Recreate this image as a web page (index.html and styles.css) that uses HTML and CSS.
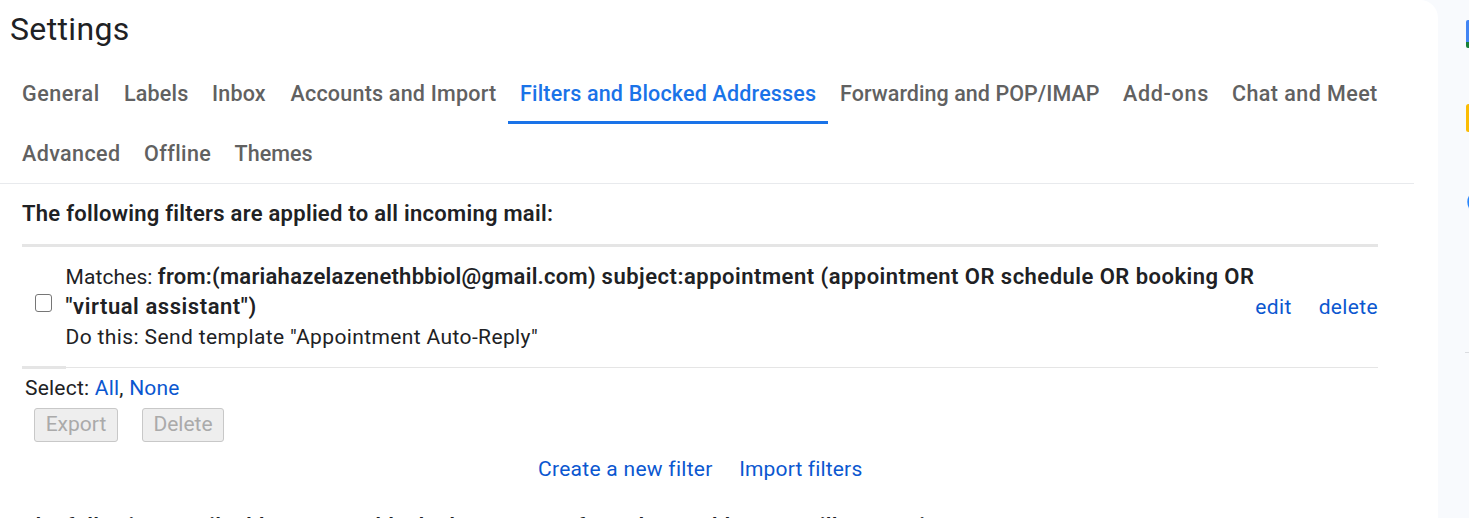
FILE: index.html
```html
<!DOCTYPE html>
<html lang="en">
<head>
<meta charset="utf-8">
<title>Settings</title>
<link rel="stylesheet" href="styles.css">
</head>
<body>
<div class="app">
  <main class="panel">
    <h1 class="title">Settings</h1>
    <nav class="tabs">
      <a class="tab t-general">General</a>
      <a class="tab t-labels">Labels</a>
      <a class="tab t-inbox">Inbox</a>
      <a class="tab t-accounts">Accounts and Import</a>
      <a class="tab t-filters active">Filters and Blocked Addresses</a>
      <a class="tab t-forwarding">Forwarding and POP/IMAP</a>
      <a class="tab t-addons">Add-ons</a>
      <a class="tab t-chat">Chat and Meet</a>
      <a class="tab t-advanced">Advanced</a>
      <a class="tab t-offline">Offline</a>
      <a class="tab t-themes">Themes</a>
    </nav>
    <section class="content">
      <h2 class="heading">The following filters are applied to all incoming mail:</h2>
      <div class="filter">
        <div class="check"><span class="box"></span></div>
        <div class="desc">
          <div><span class="matches">Matches: </span><b class="query q-from">from:(mariahazelazenethbbiol@gmail.com) </b><b class="query q-subject">subject:appointment </b><b class="query q-words">(appointment OR schedule OR booking OR</b></div>
          <div><b class="query q-phrase">"virtual assistant")</b></div>
          <div class="action">Do this: Send template "Appointment Auto-Reply"</div>
        </div>
        <div class="ops"><a class="edit">edit</a><a class="del">delete</a></div>
      </div>
      <div class="rule"></div>
      <div class="select">Select: <a>All</a>, <a>None</a></div>
      <div class="buttons"><button class="btn export" disabled>Export</button><button class="btn delete" disabled>Delete</button></div>
      <div class="links"><a class="create">Create a new filter</a><a class="import">Import filters</a></div>
      <h2 class="blocked">The following email addresses are blocked. Messages from these addresses will appear in Spam:</h2>
    </section>
  </main>
  <aside class="side">
    <svg class="side-icon calendar" width="3" height="28" viewBox="0 0 3 28"><path d="M3 0H2Q0 0 0 2V22H3Z" fill="#4285f4"/><path d="M0 22H3V28H2Q0 28 0 26Z" fill="#188038"/></svg>
    <svg class="side-icon keep" width="3" height="28" viewBox="0 0 3 28"><path d="M3 0H2.500Q0 0 0 2.500V25.500Q0 28 2.500 28H3Z" fill="#fbbc04"/></svg>
    <svg class="side-icon tasks" width="3" height="28" viewBox="0 0 3 28"><circle cx="13.300" cy="14" r="12" fill="#2684fc"/></svg>
    <div class="side-line"></div>
  </aside>
</div>
</body>
</html>
```
FILE: styles.css
```css
* { box-sizing: border-box; }
body {
  margin: 0;
  overflow: hidden;
  background: #f8fafd;
  color: #202124;
  font: 400 21px/30px Roboto, "Liberation Sans", sans-serif;
}
h1, h2 { margin: 0; }
.app { display: flex; width: 1469px; height: 518px; overflow: hidden; }
.panel { width: 1438px; height: 518px; background: #fff; border-radius: 0 18px 0 0; overflow: hidden; white-space: nowrap; }
.title { height: 64px; padding: 9px 0 0 10px; font-size: 32px; line-height: 40px; font-weight: 400; letter-spacing: 0.350px; }
.tabs { display: flex; flex-wrap: wrap; width: 1414px; height: 120px; padding-left: 10px; border-bottom: 1px solid #e8eaed; }
.tab { height: 60px; padding: 15px 0 0 12px; color: #616161; font-size: 21.500px; font-weight: 500; letter-spacing: 0.180px; }
.tab.active { color: #1a73e8; border-bottom: 3px solid #1a73e8; }
.t-general { width: 102px; letter-spacing: 0.550px; }
.t-labels { width: 88px; }
.t-inbox { width: 78.500px; }
.t-accounts { width: 229.500px; letter-spacing: 0.220px; }
.t-filters { width: 320px; }
.t-forwarding { width: 283px; letter-spacing: 0.050px; }
.t-addons { width: 109px; letter-spacing: 0.700px; }
.t-chat { width: 170px; letter-spacing: 0.430px; }
.t-advanced { width: 122px; letter-spacing: 0.400px; }
.t-offline { width: 90.500px; letter-spacing: 0.400px; }
.t-themes { letter-spacing: 0.050px; }
.content { width: 1378px; padding: 0 0 0 22px; }
.heading, .blocked { font-size: 22px; line-height: 30px; font-weight: 600; letter-spacing: 0.270px; }
.heading { height: 60px; padding-top: 15px; }
.filter { display: flex; height: 122px; border-top: 3px solid #e5e5e5; }
.check { width: 43.500px; padding: 47px 0 0 13px; }
.box { display: block; width: 17px; height: 18px; border: 1.500px solid #767676; border-radius: 3px; }
.desc { flex: 1; min-width: 0; padding-top: 15px; }
.matches { letter-spacing: 0.100px; }
.query { font-size: 22px; line-height: 1; font-weight: 600; white-space: pre; }
.q-from { letter-spacing: 0.250px; }
.q-subject { letter-spacing: 0.510px; }
.q-words { letter-spacing: 0.470px; }
.q-phrase { letter-spacing: 0.560px; }
.action { letter-spacing: 0.380px; }
.ops { display: flex; gap: 27px; padding-top: 45px; letter-spacing: 0.350px; }
a { color: #0b57d0; }
.rule {
  height: 3px;
  background:
    linear-gradient(#e5e5e5, #e5e5e5) 0 0 / 44px 3px no-repeat,
    linear-gradient(#e5e5e5, #e5e5e5) 0 1px / 100% 1px no-repeat;
}
.select { padding: 4px 0 0 3px; height: 39px; letter-spacing: 0.220px; }
.buttons { display: flex; gap: 24px; padding-left: 12px; }
.btn { height: 34px; padding: 0 0 2px; border: 1px solid #c8c8c8; border-radius: 3px; background: #eee; color: #aaa; font: inherit; line-height: 30px; }
.export { width: 84px; }
.delete { width: 82px; }
.links { display: flex; gap: 26.500px; padding: 12px 0 0 516px; height: 70px; }
.create { letter-spacing: 0.280px; }
.import { letter-spacing: 0.150px; }
.blocked { letter-spacing: 0.300px; }
.side { display: flex; flex-direction: column; align-items: flex-end; width: 31px; height: 518px; padding-top: 20px; }
.side-icon { flex: none; }
.keep, .tasks { margin-top: 56px; }
.side-line { width: 4px; height: 1px; margin-top: 136px; background: #dadce0; }
```
